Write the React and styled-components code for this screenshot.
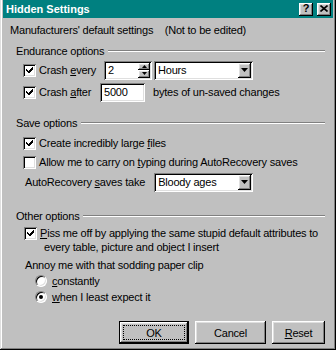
import React from 'react';
import styled, { createGlobalStyle } from 'styled-components';

const Global = createGlobalStyle`
  html, body { margin: 0; padding: 0; background: #c0c0c0; }
  body {
    font-family: "Liberation Sans", Arial, sans-serif;
    font-size: 11px;
    letter-spacing: -0.2px;
    color: #000;
  }
  * { box-sizing: border-box; }
`;

const raised = `
  box-shadow: inset -1px -1px #000, inset 1px 1px #fff, inset -2px -2px #808080, inset 2px 2px #dfdfdf;
`;
const sunken = `
  box-shadow: inset 1px 1px #808080, inset -1px -1px #fff, inset 2px 2px #000, inset -2px -2px #dfdfdf;
`;

const Window = styled.div`
  width: 336px;
  height: 350px;
  background: #c0c0c0;
  padding: 0 3px 3px 3px;
  box-shadow: inset -1px -1px #000, inset 1px 0 #dfdfdf, inset -2px -2px #808080, inset 2px 0 #fff;
  display: flex;
  flex-direction: column;
`;

const TitleBar = styled.div`
  height: 18px;
  background: #008080;
  display: flex;
  align-items: center;
  justify-content: space-between;
  padding: 0 2px 0 3px;
`;

const Title = styled.span`
  color: #fff;
  font-weight: bold;
  font-size: 11px;
  letter-spacing: 0;
`;

const CapButtons = styled.div`
  display: flex;
  gap: 4px;
`;

const CapButton = styled.div`
  width: 14px;
  height: 13px;
  background: #c0c0c0;
  ${raised}
  display: flex;
  align-items: center;
  justify-content: center;
  font-weight: bold;
  font-size: 11px;
  line-height: 1;
  padding-bottom: 1px;
`;

const Body = styled.div`
  display: flex;
  flex-direction: column;
  padding: 5px 8px 0 7px;
  flex: 1;
`;

const Line = styled.div`
  height: ${p => p.$h || 14}px;
  margin-top: ${p => p.$mt || 0}px;
  padding-left: ${p => p.$pl || 0}px;
  display: flex;
  align-items: center;
  white-space: pre;
`;

const GroupHeader = styled.div`
  height: 14px;
  margin-top: ${p => p.$mt || 0}px;
  padding-left: 6px;
  display: flex;
  align-items: center;
`;

const Etch = styled.div`
  flex: 1;
  margin-left: 4px;
  height: 2px;
  border-top: 1px solid #808080;
  border-bottom: 1px solid #fff;
`;

const U = styled.span`
  text-decoration: underline;
  text-underline-offset: 1px;
`;

const CheckItem = styled.label`
  display: flex;
  align-items: ${p => (p.$top ? 'flex-start' : 'center')};
  gap: 3px;
  width: ${p => (p.$w ? `${p.$w}px` : 'auto')};
  flex-shrink: 0;
`;

const Box = styled.span`
  width: 13px;
  height: 13px;
  flex-shrink: 0;
  background: #fff;
  ${sunken}
  display: flex;
  align-items: center;
  justify-content: center;
  margin-top: ${p => p.$mt || 0}px;
`;

const Checkbox = ({ checked, mt }) => (
  <Box $mt={mt}>
    {checked && (
      <svg width="13" height="13" viewBox="0 0 13 13" shapeRendering="crispEdges">
        <path d="M3 5h1v1h1v1h1V6h1V5h1V4h1V3h1v3h-1v1h-1v1h-1v1h-1v1H6V9H5V8H4V7H3z" fill="#000" />
      </svg>
    )}
  </Box>
);

const MultiText = styled.span`
  line-height: 14px;
  padding-left: 4px;
  text-indent: -4px;
  white-space: normal;
`;

const Field = styled.div`
  width: ${p => p.$w}px;
  height: 19px;
  margin-left: ${p => p.$ml || 0}px;
  background: #fff;
  ${sunken}
  display: flex;
  align-items: center;
  padding: 2px 2px 2px 4px;
  flex-shrink: 0;
`;

const FieldText = styled.span`
  flex: 1;
`;

const SideText = styled.span`
  margin-left: ${p => p.$ml || 0}px;
`;

const SpinCol = styled.div`
  width: 12px;
  height: 15px;
  display: flex;
  flex-direction: column;
`;

const SpinBtn = styled.div`
  flex: 1;
  background: #c0c0c0;
  ${raised}
  display: flex;
  align-items: center;
  justify-content: center;
`;

const DropBtn = styled.div`
  width: 13px;
  height: 15px;
  background: #c0c0c0;
  ${raised}
  display: flex;
  align-items: center;
  justify-content: center;
`;

const Arrow = ({ up, w = 7 }) => {
  const h = Math.ceil(w / 2);
  return (
    <svg width={w} height={h} viewBox={`0 0 ${w} ${h}`}>
      <polygon points={up ? `0,${h} ${w},${h} ${w / 2},0` : `0,0 ${w},0 ${w / 2},${h}`} fill="#000" />
    </svg>
  );
};

const Spinner = ({ value, w }) => (
  <Field $w={w}>
    <FieldText>{value}</FieldText>
    <SpinCol>
      <SpinBtn><Arrow up w={5} /></SpinBtn>
      <SpinBtn><Arrow w={5} /></SpinBtn>
    </SpinCol>
  </Field>
);

const Combo = ({ value, w, ml }) => (
  <Field $w={w} $ml={ml}>
    <FieldText>{value}</FieldText>
    <DropBtn><Arrow w={7} /></DropBtn>
  </Field>
);

const RadioItem = styled.label`
  display: flex;
  align-items: center;
  gap: 5px;
`;

const RadioCircle = styled.span`
  width: 12px;
  height: 12px;
  border-radius: 50%;
  background: #fff;
  border: 1px solid;
  border-color: #808080 #fff #fff #808080;
  box-shadow: inset 1px 1px #000, inset -1px -1px #dfdfdf;
  display: flex;
  align-items: center;
  justify-content: center;
  flex-shrink: 0;
`;

const Dot = styled.span`
  width: 4px;
  height: 4px;
  border-radius: 50%;
  background: #000;
`;

const Radio = ({ checked }) => <RadioCircle>{checked && <Dot />}</RadioCircle>;

const Buttons = styled.div`
  margin-top: ${p => p.$mt || 0}px;
  display: flex;
  justify-content: flex-end;
  gap: 6px;
`;

const Button = styled.div`
  width: ${p => p.$w}px;
  height: 23px;
  background: #c0c0c0;
  ${raised}
  ${p => p.$default && `
    box-shadow: inset 0 0 0 1px #000, inset -2px -2px #000, inset 2px 2px #fff, inset -3px -3px #808080, inset 3px 3px #dfdfdf;
  `}
  display: flex;
  align-items: center;
  justify-content: center;
  position: relative;
`;

const Focus = styled.span`
  position: absolute;
  inset: 4px;
  border: 1px dotted #000;
`;

export default function App() {
  return (
    <>
      <Global />
      <Window>
        <TitleBar>
          <Title>Hidden Settings</Title>
          <CapButtons>
            <CapButton>?</CapButton>
            <CapButton>
              <svg width="8" height="7" viewBox="0 0 8 7">
                <path d="M0.5 0.5L7.5 6.5M7.5 0.5L0.5 6.5" stroke="#000" strokeWidth="1.6" />
              </svg>
            </CapButton>
          </CapButtons>
        </TitleBar>
        <Body>
          <Line $mt={0}>Manufacturers' default settings    (Not to be edited)</Line>

          <GroupHeader $mt={7}>Endurance options<Etch /></GroupHeader>
          <Line $h={20} $mt={2} $pl={13}>
            <CheckItem $w={81}><Checkbox checked /><span>Crash <U>e</U>very</span></CheckItem>
            <Spinner value="2" w={48} />
            <Combo value="Hours" w={99} ml={2} />
          </Line>
          <Line $h={20} $mt={2} $pl={13}>
            <CheckItem $w={77}><Checkbox checked /><span>Crash <U>a</U>fter</span></CheckItem>
            <Field $w={45}><FieldText>5000</FieldText></Field>
            <SideText $ml={8}>bytes of un-saved changes</SideText>
          </Line>

          <GroupHeader $mt={14}>Save options<Etch /></GroupHeader>
          <Line $h={18} $mt={4} $pl={13}>
            <CheckItem><Checkbox checked /><span>Create incredibly large <U>f</U>iles</span></CheckItem>
          </Line>
          <Line $h={18} $mt={1} $pl={13}>
            <CheckItem><Checkbox /><span>Allow me to carry on <U>t</U>yping during AutoRecovery saves</span></CheckItem>
          </Line>
          <Line $h={20} $mt={1} $pl={15}>
            <span>AutoRecovery <U>s</U>aves take</span>
            <Combo value="Bloody ages" w={99} ml={9} />
          </Line>

          <GroupHeader $mt={17}>Other options<Etch /></GroupHeader>
          <Line $h={28} $mt={3} $pl={14}>
            <CheckItem $top><Checkbox checked mt={1} />
              <MultiText><U>P</U>iss me off by applying the same stupid default attributes to<br />every table, picture and object I insert</MultiText>
            </CheckItem>
          </Line>
          <Line $mt={4} $pl={15}>Annoy me with that sodding paper clip</Line>
          <Line $h={16} $mt={1} $pl={25}>
            <RadioItem><Radio /><span><U>c</U>onstantly</span></RadioItem>
          </Line>
          <Line $h={16} $mt={0} $pl={25}>
            <RadioItem><Radio checked /><span><U>w</U>hen I least expect it</span></RadioItem>
          </Line>

          <Buttons $mt={16}>
            <Button $w={70} $default><Focus />OK</Button>
            <Button $w={71}>Cancel</Button>
            <Button $w={53}><span><U>R</U>eset</span></Button>
          </Buttons>
        </Body>
      </Window>
    </>
  );
}
